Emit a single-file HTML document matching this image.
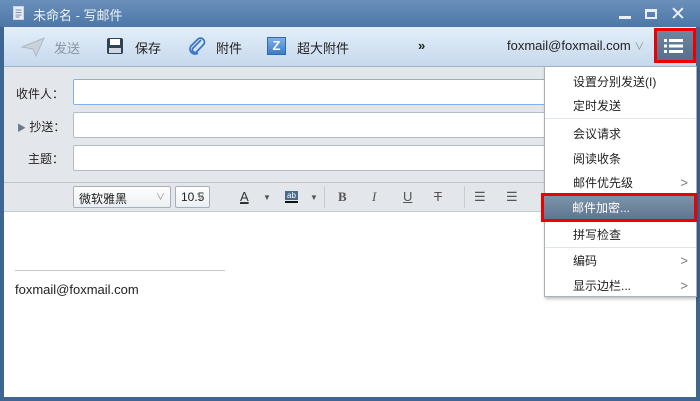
<!DOCTYPE html>
<html><head><meta charset="utf-8"><style>
*{margin:0;padding:0;box-sizing:border-box}
body{width:700px;height:401px;overflow:hidden;font-family:"Liberation Sans","Noto Sans CJK SC",sans-serif;font-size:12px;color:#222;background:#3f6591;position:relative}
.abs{position:absolute}
#title{left:0;top:0;width:700px;height:27px;background:linear-gradient(#6a8fbb,#4d77a7)}
#tb{left:4px;top:27px;width:692px;height:40px;background:linear-gradient(#e3eef9,#c6d9ed);border-bottom:1px solid #9fb2c7}
#form{left:4px;top:67px;width:692px;height:115px;background:#e3e7eb}
#fmt{left:4px;top:182px;width:692px;height:30px;background:#e3e7eb;border-top:1px solid #c0c6cc;border-bottom:1px solid #c8ccd0}
#body{left:4px;top:212px;width:692px;height:185px;background:#fff}
.inp{position:absolute;left:73px;width:622px;height:26px;background:#fff;border:1px solid #b4bcc4;border-radius:2px}
.lbl{position:absolute;font-size:12px;color:#222}
.sel{position:absolute;top:186px;height:22px;background:linear-gradient(#fff,#eceff2);border:1px solid #a9b0b7;border-radius:2px;font-size:12px;padding:3px 0 0 5px}
#menu{left:544px;top:66px;width:153px;height:231px;background:#fff;border:1px solid #a8b2bc;box-shadow:1px 2px 3px rgba(0,0,0,.25)}
.mi{position:absolute;left:28px;font-size:12px;color:#222}
.arr{position:absolute;right:8px;color:#777;font-size:13px}
.sep{position:absolute;left:0;width:151px;height:1px;background:#e2e5e8}
.tbt{position:absolute;top:38px;font-size:13px;color:#222}
.fi{position:absolute;top:189px;color:#555;font-size:13px}
</style></head><body>
<div id="title" class="abs"></div>
<svg class="abs" style="left:13px;top:6px" width="12" height="14"><rect x="0.5" y="0.5" width="10" height="13" fill="#e8eef5" stroke="#c8d4e2"/><path d="M2.5 4h6M2.5 6.5h6M2.5 9h6M2.5 11h4" stroke="#7a8fa8"/></svg>
<div class="abs" style="left:33px;top:5px;color:#eef3f9;font-size:13px">未命名 - 写邮件</div>
<div class="abs" style="left:619px;top:16px;width:12px;height:3px;background:#e8eef5"></div>
<div class="abs" style="left:645px;top:9px;width:12px;height:10px;border:2px solid #e8eef5;border-top-width:3px"></div>
<div class="abs" style="left:670px;top:3px;color:#eef3f9;font-size:19px">✕</div>
<div id="tb" class="abs"></div>
<svg class="abs" style="left:21px;top:37px" width="24" height="20"><path d="M1 10 L23 1 L15 19 L12 12 Z" fill="#c9d3dc" stroke="#aeb9c4"/></svg>
<div class="tbt" style="left:54px;color:#8a96a2">发送</div>
<svg class="abs" style="left:106px;top:37px" width="18" height="18"><rect x="1" y="1" width="16" height="16" rx="2" fill="#2f4356"/><rect x="4" y="2" width="10" height="6" fill="#fff"/><rect x="3" y="11" width="12" height="5" fill="#cfd8e0"/></svg>
<div class="tbt" style="left:135px">保存</div>
<svg class="abs" style="left:188px;top:36px" width="18" height="20"><path d="M13 4 L5 12 a2.5 2.5 0 0 0 4 3.5 L16 8 a4 4 0 0 0-6-5 L3 10 a5 5 0 0 0 7 7" fill="none" stroke="#3b76c4" stroke-width="1.8"/></svg>
<div class="tbt" style="left:216px">附件</div>
<div class="abs" style="left:267px;top:37px;width:19px;height:18px;background:linear-gradient(#7fb0e6,#3d7cc9);border:1px solid #3569ad;color:#fff;font-weight:bold;font-size:13px;text-align:center;line-height:16px">Z</div>
<div class="tbt" style="left:297px">超大附件</div>
<div class="tbt" style="left:418px;font-weight:bold">»</div>
<div class="tbt" style="left:507px">foxmail@foxmail.com <span style="color:#888;font-size:10px">∨</span></div>
<div class="abs" style="left:654px;top:28px;width:42px;height:35px;border:3px solid #e00;background:linear-gradient(#6d86a0,#56708c)"></div>
<svg class="abs" style="left:664px;top:38px" width="20" height="16"><g fill="#fff"><rect x="0" y="1" width="3" height="3"/><rect x="0" y="6.5" width="3" height="3"/><rect x="0" y="12" width="3" height="3"/><rect x="5" y="1" width="14" height="3"/><rect x="5" y="6.5" width="14" height="3"/><rect x="5" y="12" width="14" height="3"/></g></svg>
<div id="form" class="abs"></div>
<div class="lbl" style="left:16px;top:85px">收件人：</div>
<div class="lbl" style="left:17px;top:118px"><span style="color:#6a7a8a;font-size:9px">▶</span> 抄送：</div>
<div class="lbl" style="left:28px;top:150px">主题：</div>
<div class="inp" style="top:79px;border-color:#7fb2ea"></div>
<div class="inp" style="top:112px"></div>
<div class="inp" style="top:145px"></div>
<div id="fmt" class="abs"></div>
<div class="sel" style="left:73px;width:98px">微软雅黑<span style="position:absolute;right:5px;top:3px;color:#888;font-size:9px">∨</span></div>
<div class="sel" style="left:175px;width:35px">10.5<span style="position:absolute;right:4px;top:3px;color:#888;font-size:9px">∨</span></div>
<div class="fi" style="left:240px;text-decoration:underline;text-decoration-thickness:2px;color:#333">A</div>
<div class="fi" style="left:263px;font-size:8px;top:193px">▼</div>
<div class="abs" style="left:285px;top:191px;width:13px;height:9px;background:#4a6a8a;color:#fff;font-size:8px;line-height:9px;text-align:center">ab</div>
<div class="abs" style="left:285px;top:201px;width:13px;height:2px;background:#111"></div>
<div class="fi" style="left:310px;font-size:8px;top:193px">▼</div>
<div class="abs" style="left:324px;top:186px;width:1px;height:22px;background:#c8ccd0"></div>
<div class="fi" style="left:338px;font-weight:bold;font-family:'Liberation Serif',serif">B</div>
<div class="fi" style="left:372px;font-style:italic;font-family:'Liberation Serif',serif">I</div>
<div class="fi" style="left:403px;text-decoration:underline">U</div>
<div class="fi" style="left:434px;text-decoration:line-through">T</div>
<div class="abs" style="left:464px;top:186px;width:1px;height:22px;background:#c8ccd0"></div>
<div class="fi" style="left:474px">☰</div>
<div class="fi" style="left:506px">☰</div>
<div id="body" class="abs"></div>
<div class="abs" style="left:15px;top:270px;width:210px;height:1px;background:#c8c8c8"></div>
<div class="abs" style="left:15px;top:282px;font-size:13px">foxmail@foxmail.com</div>
<div class="abs" style="left:0;top:397px;width:700px;height:4px;background:#3f6591"></div>
<div id="menu" class="abs">
<div class="mi" style="top:6px">设置分别发送(I)</div>
<div class="mi" style="top:30px">定时发送</div>
<div class="sep" style="top:51px"></div>
<div class="mi" style="top:58px">会议请求</div>
<div class="mi" style="top:83px">阅读收条</div>
<div class="mi" style="top:107px">邮件优先级</div><div class="arr" style="top:108px">&gt;</div>
<div class="mi" style="top:159px">拼写检查</div>
<div class="sep" style="top:180px"></div>
<div class="mi" style="top:185px">编码</div><div class="arr" style="top:186px">&gt;</div>
<div class="mi" style="top:210px">显示边栏...</div><div class="arr" style="top:211px">&gt;</div>
</div>
<div class="abs" style="left:541px;top:193px;width:156px;height:29px;border:3px solid #e00;background:linear-gradient(#7e93a8,#5d7690)"></div>
<div class="abs" style="left:572px;top:199px;color:#fff;font-size:12px">邮件加密...</div>
</body></html>
